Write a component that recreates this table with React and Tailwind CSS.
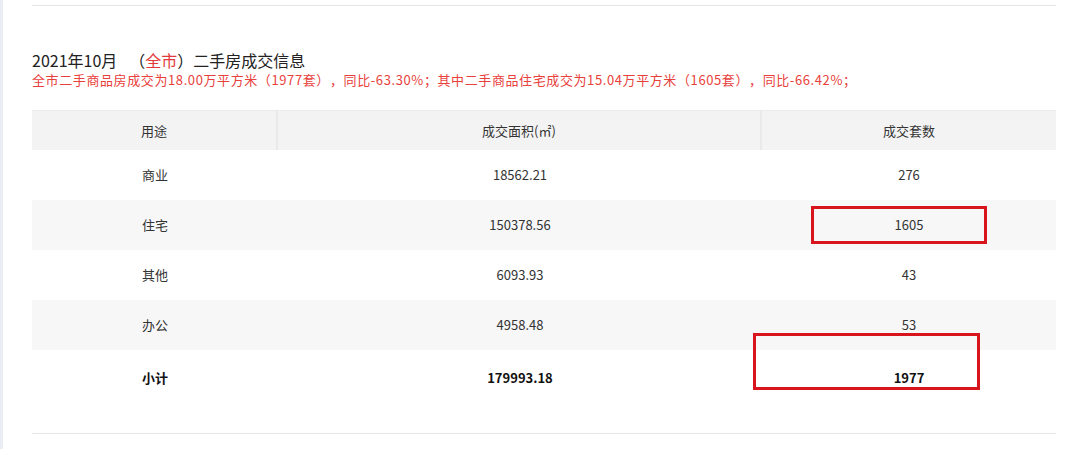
import React from 'react';

const rows = [
  { use: '商业', area: '18562.21', count: '276' },
  { use: '住宅', area: '150378.56', count: '1605' },
  { use: '其他', area: '6093.93', count: '43' },
  { use: '办公', area: '4958.48', count: '53' },
];

const font = { fontFamily: '"Noto Sans CJK SC", "Noto Sans", sans-serif' };

export default function App() {
  return (
    <div className="relative flex h-[449px] w-[1080px] overflow-hidden bg-white [text-spacing-trim:space-all]" style={font}>
      {/* left edge strip */}
      <div className="w-[3px] shrink-0 bg-[#ececf3]" />

      <div className="ml-[29px] flex w-[1024px] flex-col">
        <div className="mt-[5px] h-px bg-[#e6e6e6]" />

        {/* Title */}
        <div className="mt-[44px] text-[16px] leading-[21px] text-[#222]">
          2021年10月<span className="ml-[12px]">（</span>
          <span className="text-[#e4393c]">全市</span>）二手房成交信息
        </div>
        <div className="text-[13px] leading-[18px] tracking-[0.6px] text-[#e8413c]">
          全市二手商品房成交为18.00万平方米（1977套），同比-63.30%；其中二手商品住宅成交为15.04万平方米（1605套），同比-66.42%；
        </div>

        {/* Table */}
        <div className="mt-[21px] text-[13px] text-[#333]">
          <div className="grid h-[40px] grid-cols-[246px_484px_294px] border-t border-[#ebebeb] bg-[#f3f3f4]">
            <div className="flex items-center justify-center border-r-2 border-[#e9e9ea]">用途</div>
            <div className="flex items-center justify-center border-r-2 border-[#e9e9ea]">成交面积(㎡)</div>
            <div className="flex items-center justify-center">成交套数</div>
          </div>
          {rows.map((r, i) => (
            <div
              key={r.use}
              className={`grid h-[50px] grid-cols-[246px_484px_294px] ${i % 2 === 1 ? 'bg-[#f7f7f8]' : 'bg-white'}`}
            >
              <div className="flex items-center justify-center">{r.use}</div>
              <div className="flex items-center justify-center">{r.area}</div>
              <div className="flex items-center justify-center">{r.count}</div>
            </div>
          ))}
          <div className="grid h-[56px] grid-cols-[246px_484px_294px] font-bold text-[#111]">
            <div className="flex items-center justify-center">小计</div>
            <div className="flex items-center justify-center">179993.18</div>
            <div className="flex items-center justify-center">1977</div>
          </div>
        </div>

        <div className="mt-[27px] h-px bg-[#e6e6e6]" />
      </div>

      {/* red highlight boxes */}
      <div className="absolute left-[811px] top-[206px] h-[38px] w-[176px] border-[3px] border-[#d8151d]" />
      <div className="absolute left-[753px] top-[333px] h-[57px] w-[227px] border-[3px] border-[#d8151d]" />
    </div>
  );
}
